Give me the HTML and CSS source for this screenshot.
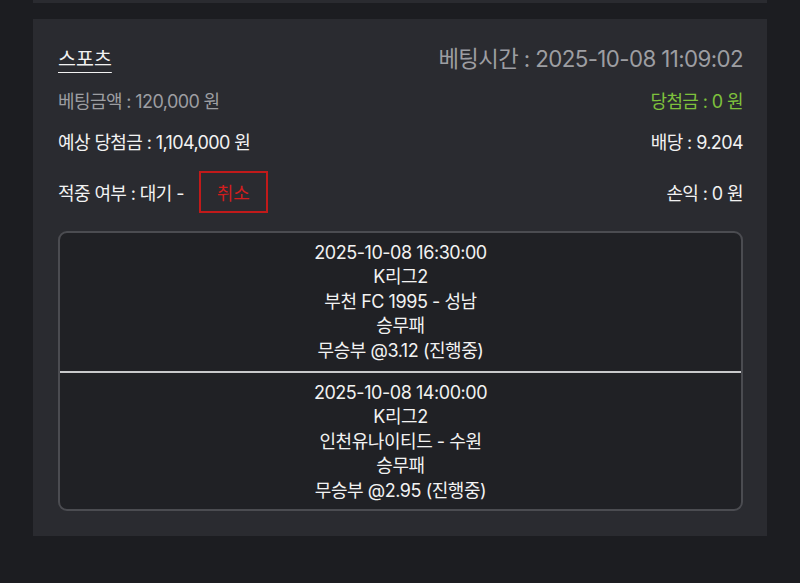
FILE: index.html
```html
<!DOCTYPE html>
<html lang="ko">
<head>
<meta charset="utf-8">
<link rel="stylesheet" href="styles.css">
</head>
<body>
<div class="prev-card"></div>
<div class="card">
  <div class="row row-head">
    <a class="title">스포츠</a>
    <span class="time">베팅시간 : 2025-10-08 11:09:02</span>
  </div>
  <div class="row row-amount">
    <span class="muted">베팅금액 : 120,000 원</span>
    <span class="win">당첨금 : 0 원</span>
  </div>
  <div class="row row-expect">
    <span>예상 당첨금 : 1,104,000 원</span>
    <span>배당 : 9.204</span>
  </div>
  <div class="row row-status">
    <div class="status">
      <span>적중 여부 : 대기 -</span>
      <button class="cancel">취소</button>
    </div>
    <span>손익 : 0 원</span>
  </div>
  <div class="games">
    <div class="game">
      <div>2025-10-08 16:30:00</div>
      <div>K리그2</div>
      <div>부천 FC 1995 - 성남</div>
      <div>승무패</div>
      <div>무승부 @3.12 (진행중)</div>
    </div>
    <div class="game">
      <div>2025-10-08 14:00:00</div>
      <div>K리그2</div>
      <div>인천유나이티드 - 수원</div>
      <div>승무패</div>
      <div>무승부 @2.95 (진행중)</div>
    </div>
  </div>
</div>
</body>
</html>
```
FILE: styles.css
```css
* { box-sizing: border-box; }
html, body {
  margin: 0;
  background: #1c1d21;
}
body {
  font-family: Inter, "Noto Sans CJK KR", sans-serif;
  color: #f2f2f2;
  font-size: 18px;
  letter-spacing: -0.6px;
}
.prev-card {
  height: 3px;
  margin: 0 33px;
  background: #2a2b30;
}
.card {
  margin: 16px 33px 0;
  background: #2a2b30;
  padding: 24px 24px 25px 25px;
}
.row {
  display: flex;
  justify-content: space-between;
  align-items: center;
  height: 28px;
}
.row-amount { margin-top: 15px; }
.row-expect { margin-top: 13px; }
.row-status { margin-top: 16px; height: 42px; }
.title {
  font-size: 19.5px;
  color: #f2f2f2;
  text-decoration: underline;
  text-underline-offset: 6px;
  text-decoration-thickness: 1px;
  letter-spacing: 0;
}
.time {
  font-size: 22.3px;
  color: #9d9ea2;
}
.muted { color: #9d9ea2; }
.win { color: #7ec13c; }
.status {
  display: flex;
  align-items: center;
  gap: 15px;
}
.cancel {
  width: 69px;
  height: 42px;
  background: transparent;
  border: 2px solid #c11a1a;
  color: #d21e1e;
  font-family: inherit;
  font-size: 18px;
  letter-spacing: 0;
  padding: 0;
}
.games {
  margin-top: 18px;
  height: 280px;
  border: 2px solid #4b4c51;
  border-radius: 9px;
  background: #202125;
}
.game {
  text-align: center;
  line-height: 24.4px;
  letter-spacing: -0.45px;
  padding: 8px 0 8px;
}
.game + .game {
  border-top: 2px solid #c9c9cb;
}
```
